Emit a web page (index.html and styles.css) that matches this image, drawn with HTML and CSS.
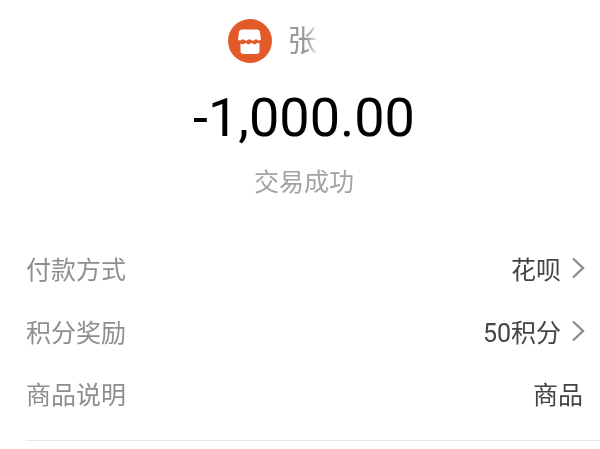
FILE: index.html
```html
<!DOCTYPE html>
<html lang="zh-CN">
<head>
    <meta charset="UTF-8">
    <meta name="viewport" content="width=device-width, initial-scale=1.0">
    <title>交易详情</title>
    <link rel="stylesheet" href="styles.css">
</head>
<body>

    <div class="payee">
        <svg class="shop-icon" viewBox="0 0 46 46" width="46" height="46">
            <circle cx="23" cy="23" r="22" fill="#e2592a"/>
            <path d="M16 11.500h14a3 3 0 0 1 3 2.600l1 7.400c-1.200 1.300-2.200 1.300-3.200.5-1.200-1-2.200-1-3.300 0-1.200 1-2.200 1-3.300 0-1.100-1-2.300-1-3.400 0-1.100 1-2.100 1-3.300 0-1.100-1-2.100-1-3.300 0-1 .8-2 .8-3.200-.5l1-7.400a3 3 0 0 1 3-2.600z" fill="#fff"/>
            <path d="M13.500 25.500c1.500 1 2.500 1 3.500.2 1-.8 2-.8 3 0 1 .8 2 .8 3 0 1-.8 2-.8 3 0 1 .8 2 .8 3 0 1-.8 2-.8 3.500-.2v7.500a3 3 0 0 1-3 3h-13a3 3 0 0 1-3-3z" fill="#fff"/>
        </svg>
        <span class="payee-name">张</span>
    </div>

    <div class="amount">-1,000.00</div>
    <div class="status">交易成功</div>

    <div class="details">
        <div class="row">
            <span class="label">付款方式</span>
            <span class="value">花呗
                <svg class="arrow" viewBox="0 0 14 22" width="14" height="22"><path d="M2 1.500l10 9.500-10 9.500" fill="none" stroke="#8c8c8c" stroke-width="2.400"/></svg>
            </span>
        </div>
        <div class="row">
            <span class="label">积分奖励</span>
            <span class="value">50积分
                <svg class="arrow" viewBox="0 0 14 22" width="14" height="22"><path d="M2 1.500l10 9.500-10 9.500" fill="none" stroke="#8c8c8c" stroke-width="2.400"/></svg>
            </span>
        </div>
        <div class="row">
            <span class="label">商品说明</span>
            <span class="value">商品</span>
        </div>
    </div>

</body>
</html>
```

FILE: styles.css
```css
html, body {
    height: 100%;
}
body {
    margin: 0;
    background: #fff;
    font-family: "Roboto", "Noto Sans CJK SC", sans-serif;
    overflow: hidden;
}
.payee {
    display: flex;
    justify-content: center;
    align-items: center;
    gap: 15px;
    height: 46px;
    padding: 18px 40px 0 0;
}
.shop-icon {
    flex: none;
}
.payee-name {
    width: 46px;
    margin-top: -6px;
    font-size: 30px;
    color: #999;
    filter: blur(0.6px);
    -webkit-mask-image: linear-gradient(to right, #000 40%, transparent 68%);
    mask-image: linear-gradient(to right, #000 40%, transparent 68%);
}
.amount {
    margin-top: 25px;
    padding-left: 8px;
    text-align: center;
    font-size: 54px;
    line-height: 58px;
    color: #000;
    filter: blur(0.3px);
}
.status {
    margin-top: 19px;
    padding-left: 8px;
    text-align: center;
    font-size: 25px;
    line-height: 34px;
    color: #a3a3a3;
    filter: blur(0.3px);
}
.details {
    margin: 37px 0 0 26px;
    padding-bottom: 15px;
    border-bottom: 1px solid #e6e6e6;
}
.row {
    display: flex;
    justify-content: space-between;
    align-items: center;
    height: 62.5px;
    padding-right: 17px;
    font-size: 25px;
    filter: blur(0.3px);
}
.label {
    color: #8e8e8e;
}
.value {
    display: flex;
    align-items: center;
    gap: 10px;
    color: #444;
}
.arrow {
    flex: none;
    margin-right: -2px;
}
```
